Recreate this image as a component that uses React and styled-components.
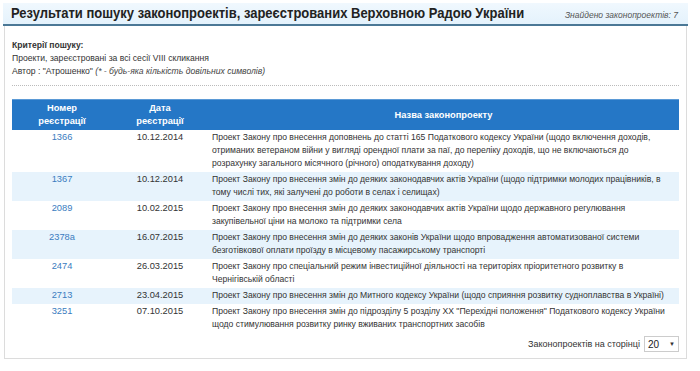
import React from 'react';
import styled, { createGlobalStyle } from 'styled-components';

const GlobalStyle = createGlobalStyle`
    body {
        margin: 0;
        background: #fff;
        font-family: "Liberation Sans", Arial, sans-serif;
        color: #333;
    }
`;

const Page = styled.div`
    padding: 3px 13px 0 4px;
`;

const Panel = styled.div`
    border: 1px solid #dcdcdc;
    border-top: none;
    padding-bottom: 6px;
`;

const TitleBar = styled.div`
    display: flex;
    align-items: flex-end;
    justify-content: space-between;
    height: 19px;
    padding: 0 10px 2px 8px;
    background: linear-gradient(#f0f8fe, #e4f2fc);
    border-bottom: 2px solid #4b7896;
    margin: 0 -1px;
    white-space: nowrap;
`;

const Title = styled.h1`
    margin: 0;
    font-size: 13px;
    font-weight: bold;
    color: #222;
    line-height: 16px;
    transform: scaleY(1.08);
`;

const Found = styled.span`
    font-size: 8.5px;
    font-style: italic;
    color: #555;
    line-height: 13px;
`;

const Body = styled.div`
    padding: 13px 7px 0 7px;
`;

const Criteria = styled.div`
    font-size: 8.6px;
    line-height: 13px;
    padding-bottom: 7px;
    border-bottom: 1px dotted #bbb;
`;

const CriteriaLabel = styled.div`
    font-weight: bold;
    color: #333;
`;

const Hint = styled.i`
    color: #444;
`;

const Table = styled.table`
    width: 100%;
    margin-top: 13px;
    border-collapse: collapse;
    font-size: 8.6px;
`;

const Th = styled.th`
    background: #2577c6;
    border-top: 1px solid #5b9ad6;
    color: #fff;
    font-weight: bold;
    font-size: 9.3px;
    line-height: 13px;
    padding: 2px 4px;
    height: 25px;
    text-align: center;
    width: ${(p) => p.$w || 'auto'};
`;

const Tr = styled.tr`
    background: ${(p) => (p.$alt ? '#e7f3fc' : '#fff')};
`;

const Td = styled.td`
    vertical-align: top;
    line-height: 13px;
    padding: 1px 4px 2px;
    text-align: ${(p) => (p.$center ? 'center' : 'left')};
    color: ${(p) => (p.$link ? '#3a7cc0' : '#333')};
    font-size: ${(p) => (p.$center ? '9.3px' : 'inherit')};
`;

const Footer = styled.div`
    display: flex;
    justify-content: flex-end;
    align-items: center;
    gap: 4px;
    margin-top: 3px;
    font-size: 9px;
`;

const Select = styled.div`
    display: flex;
    align-items: center;
    justify-content: space-between;
    width: 27px;
    height: 14px;
    padding: 0 3px;
    border: 1px solid #ccc;
    font-size: 10px;
    color: #222;
`;

const Caret = styled.span`
    font-size: 6px;
    color: #333;
`;

const rows = [
    ['1366', '10.12.2014', 'Проект Закону про внесення доповнень до статті 165 Податкового кодексу України (щодо включення доходів, отриманих ветераном війни у вигляді орендної плати за паї, до переліку доходів, що не включаються до розрахунку загального місячного (річного) оподаткування доходу)'],
    ['1367', '10.12.2014', 'Проект Закону про внесення змін до деяких законодавчих актів України (щодо підтримки молодих працівників, в тому числі тих, які залучені до роботи в селах і селищах)'],
    ['2089', '10.02.2015', 'Проект Закону про внесення змін до деяких законодавчих актів України щодо державного регулювання закупівельної ціни на молоко та підтримки села'],
    ['2378а', '16.07.2015', 'Проект Закону про внесення змін до деяких законів України щодо впровадження автоматизованої системи безготівкової оплати проїзду в місцевому пасажирському транспорті'],
    ['2474', '26.03.2015', 'Проект Закону про спеціальний режим інвестиційної діяльності на територіях пріоритетного розвитку в Чернігівській області'],
    ['2713', '23.04.2015', 'Проект Закону про внесення змін до Митного кодексу України (щодо сприяння розвитку судноплавства в Україні)'],
    ['3251', '07.10.2015', 'Проект Закону про внесення змін до підрозділу 5 розділу XX "Перехідні положення" Податкового кодексу України щодо стимулювання розвитку ринку вживаних транспортних засобів'],
];

export default function App() {
    return (
        <Page>
            <GlobalStyle />
            <TitleBar>
                <Title>Результати пошуку законопроектів, зареєстрованих Верховною Радою України</Title>
                <Found>Знайдено законопроектів: 7</Found>
            </TitleBar>
            <Panel>
                <Body>
                    <Criteria>
                        <CriteriaLabel>Критерії пошуку:</CriteriaLabel>
                        <div>Проекти, зареєстровані за всі сесії VIII скликання</div>
                        <div>
                            Автор : "Атрошенко" <Hint>(* - будь-яка кількість довільних символів)</Hint>
                        </div>
                    </Criteria>
                    <Table>
                        <thead>
                            <tr>
                                <Th $w="92px">Номер<br />реєстрації</Th>
                                <Th $w="88px">Дата<br />реєстрації</Th>
                                <Th>Назва законопроекту</Th>
                            </tr>
                        </thead>
                        <tbody>
                            {rows.map((r, i) => (
                                <Tr key={r[0]} $alt={i % 2 === 1}>
                                    <Td $center $link>{r[0]}</Td>
                                    <Td $center>{r[1]}</Td>
                                    <Td>{r[2]}</Td>
                                </Tr>
                            ))}
                        </tbody>
                    </Table>
                    <Footer>
                        Законопроектів на сторінці
                        <Select>
                            20 <Caret>▼</Caret>
                        </Select>
                    </Footer>
                </Body>
            </Panel>
        </Page>
    );
}
